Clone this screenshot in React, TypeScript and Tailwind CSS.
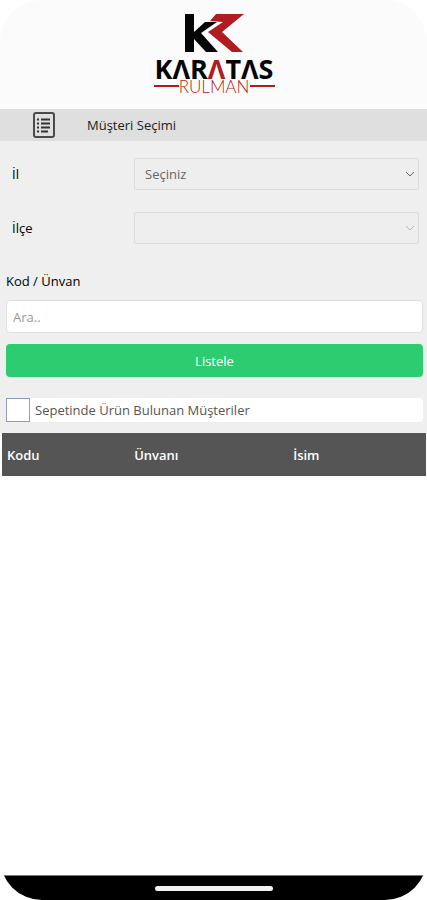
import { ReactNode } from "react";

function Logo() {
  return (
    <svg
      width="124"
      height="84"
      viewBox="0 0 124 84"
      role="img"
      aria-label="KARATAS RULMAN"
    >
      <path d="M33 2h9v18l11-10h12L49 21l17 19H54L42 27v13h-9z" fill="#050505" />
      <path d="M64 2h28L70 20l21 20H80L56 20l15-10-13-1z" fill="#b01c20" />
      <text
        x="62"
        y="67"
        textAnchor="middle"
        fontFamily="'Open Sans',sans-serif"
        fontWeight="700"
        fontSize="27"
        fill="#050505"
      >
        KΛR<tspan fill="#b01c20">Λ</tspan>TΛS
      </text>
      <path d="M2 74h25M98 74h25" stroke="#b01c20" strokeWidth="2" />
      <text
        x="62"
        y="81"
        textAnchor="middle"
        fontFamily="Lato,sans-serif"
        fontWeight="300"
        fontSize="17"
        fill="#b01c20"
      >
        RULMAN
      </text>
    </svg>
  );
}

function ListIcon() {
  return (
    <svg width="22" height="26" viewBox="0 0 22 26" fill="none" aria-hidden="true">
      <rect x="1" y="1" width="20" height="24" rx="2" stroke="#4a4a4a" strokeWidth="2" />
      <path
        d="M4 7.500h2M4 11.500h2M4 15.500h2M4 19.500h2M8 7.500h9M8 11.500h9M8 15.500h9M8 19.500h7"
        stroke="#333"
        strokeWidth="2"
      />
    </svg>
  );
}

type SelectRowProps = {
  id: string;
  label: string;
  disabled?: boolean;
  children: ReactNode;
};

function SelectRow({ id, label, disabled, children }: SelectRowProps) {
  return (
    <div className="flex items-center pr-2 pl-3">
      <label htmlFor={id} className="w-[122px] shrink-0 text-black">
        {label}
      </label>
      <div className="relative grow">
        <select
          id={id}
          disabled={disabled}
          className="block h-8 w-full appearance-none rounded-xs border border-[#dcdcdc] bg-[#eeeeee] px-2.5 text-[#666]"
        >
          {children}
        </select>
        <svg
          className={`pointer-events-none absolute top-3 right-1 ${disabled ? "opacity-40" : ""}`}
          width="10"
          height="8"
          viewBox="0 0 10 8"
          fill="none"
          stroke="#666"
          aria-hidden="true"
        >
          <path d="M1 2l4 4 4-4" />
        </svg>
      </div>
    </div>
  );
}

export default function App() {
  return (
    <div className="flex min-h-screen flex-col overflow-hidden rounded-[42px] bg-white font-['Open_Sans','Noto_Sans',sans-serif] text-[13px] leading-5">
      <header className="flex justify-center bg-[#fbfbfb] pt-3 pb-[13px]">
        <Logo />
      </header>

      <div className="flex h-8 items-center bg-[#dfdfdf] pl-[33px]">
        <ListIcon />
        <h1 className="ml-8 text-[#222]">Müşteri Seçimi</h1>
      </div>

      <main className="flex grow flex-col">
        <form className="bg-[#efefef] pt-[17px] pb-[11px]" onSubmit={(e) => e.preventDefault()}>
          <div className="flex flex-col gap-[22px]">
            <SelectRow id="il" label="İl">
              <option>Seçiniz</option>
            </SelectRow>
            <SelectRow id="ilce" label="İlçe" disabled>
              <option></option>
            </SelectRow>
          </div>

          <div className="px-1.5 pt-[27px] pr-1">
            <label htmlFor="ara" className="block text-black">
              Kod / Ünvan
            </label>
            <input
              id="ara"
              type="text"
              placeholder="Ara.."
              className="mt-[9px] block h-[33px] w-full rounded-sm border border-[#dfdfdf] bg-white px-1.5 placeholder:text-[#999]"
            />
            <button
              type="submit"
              className="mt-[11px] block h-[33px] w-full rounded-sm bg-[#2ecc71] font-medium text-white"
            >
              Listele
            </button>
            <label className="mt-[21px] flex h-6 items-center rounded-sm bg-white text-[#555]">
              <input
                type="checkbox"
                className="mr-[5px] size-6 shrink-0 appearance-none border border-[#8f9bbd] bg-white checked:bg-[#8f9bbd]"
              />
              Sepetinde Ürün Bulunan Müşteriler
            </label>
          </div>
        </form>

        <div className="pr-px pl-0.5">
          <table className="w-full table-fixed bg-[#555] text-left text-white">
            <thead>
              <tr className="h-[43px]">
                <th className="w-[30%] pl-[5px] font-semibold">Kodu</th>
                <th className="w-[37.500%] pl-[5px] font-semibold">Ünvanı</th>
                <th className="pl-[5px] font-semibold">İsim</th>
              </tr>
            </thead>
            <tbody></tbody>
          </table>
        </div>
      </main>

      <footer className="flex h-[25px] items-center justify-center border-t border-[#777] bg-black">
        <div className="h-[5px] w-[118px] rounded-full bg-[#f2f2f2]" />
      </footer>
    </div>
  );
}
